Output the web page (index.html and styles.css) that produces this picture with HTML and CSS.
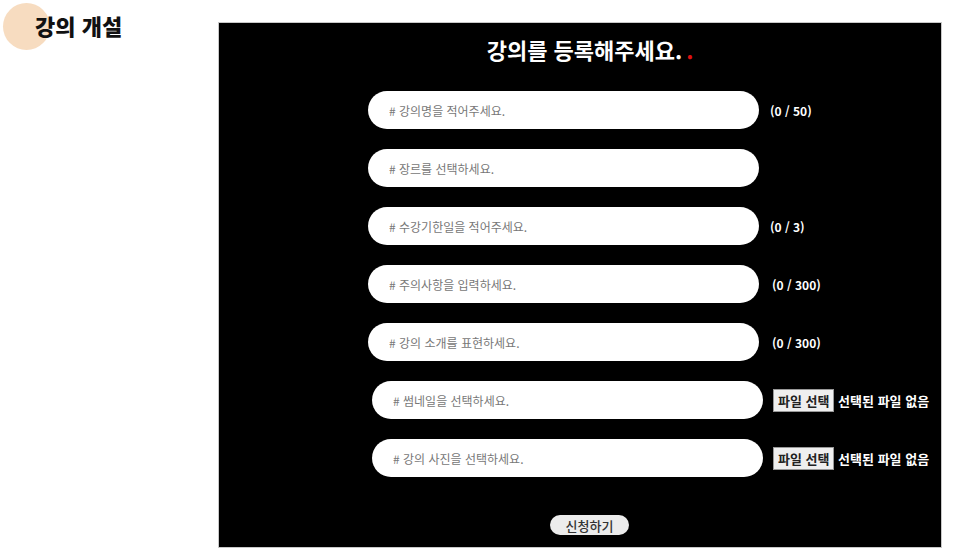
FILE: index.html
```html
<!DOCTYPE html>
<html lang="ko">
<head>
<meta charset="UTF-8">
<meta name="viewport" content="width=device-width, initial-scale=1.0">
<title>강의 개설</title>
<link rel="stylesheet" href="styles.css">
</head>
<body>

<div class="page">
    <div class="side">
        <h2 class="side-title"><span class="dot"></span><span class="side-text">강의 개설</span></h2>
    </div>

    <div class="panel">
        <h1 class="panel-title">강의를 등록해주세요.<span class="red">.</span></h1>

        <div class="form">
            <div class="row">
                <input class="field" type="text" placeholder="# 강의명을 적어주세요.">
                <span class="count">(0 / 50)</span>
            </div>
            <div class="row">
                <input class="field" type="text" placeholder="# 장르를 선택하세요.">
            </div>
            <div class="row">
                <input class="field" type="text" placeholder="# 수강기한일을 적어주세요.">
                <span class="count">(0 / 3)</span>
            </div>
            <div class="row">
                <input class="field" type="text" placeholder="# 주의사항을 입력하세요.">
                <span class="count wide">(0 / 300)</span>
            </div>
            <div class="row">
                <input class="field" type="text" placeholder="# 강의 소개를 표현하세요.">
                <span class="count wide">(0 / 300)</span>
            </div>
            <div class="row file-row">
                <input class="field" type="text" placeholder="# 썸네일을 선택하세요.">
                <span class="file"><button class="file-btn">파일 선택</button> 선택된 파일 없음</span>
            </div>
            <div class="row file-row">
                <input class="field" type="text" placeholder="# 강의 사진을 선택하세요.">
                <span class="file"><button class="file-btn">파일 선택</button> 선택된 파일 없음</span>
            </div>

            <button class="submit">신청하기</button>
        </div>
    </div>
</div>

</body>
</html>
```

FILE: styles.css
```css
body {
    font-family: "Noto Sans CJK KR", "Noto Sans", sans-serif;
    margin: 0;
    background: #ffffff;
}
.page {
    display: flex;
}
.side {
    width: 218px;
    flex: none;
}
.side-title {
    position: relative;
    margin: 0;
    padding: 11px 0 0 35px;
    font-size: 22px;
    font-weight: 900;
    color: #111;
    line-height: 28px;
}
.dot {
    position: absolute;
    left: 3px;
    top: 3px;
    width: 47px;
    height: 47px;
    border-radius: 50%;
    background: #f7dcc0;
}
.side-text {
    position: relative;
}
.panel {
    margin-top: 22px;
    width: 722px;
    height: 524px;
    background: #000;
    border: 1px solid #c8c8c8;
    box-sizing: content-box;
}
.panel-title {
    margin: 11px 0 0 20px;
    text-align: center;
    color: #fff;
    font-size: 22px;
    font-weight: bold;
    line-height: 30px;
}
.red {
    color: #d11;
    margin-left: 4px;
}
.form {
    margin: 27px 0 0 149px;
    display: flex;
    flex-direction: column;
    gap: 20px;
}
.row {
    display: flex;
    align-items: center;
    height: 38px;
}
.field {
    width: 391px;
    height: 38px;
    box-sizing: border-box;
    border: none;
    border-radius: 19px;
    background: #fff;
    padding: 0 0 0 21px;
    font-family: inherit;
    font-size: 12px;
    outline: none;
}
.field::placeholder {
    color: #777;
}
.count {
    margin-left: 11px;
    color: #fff;
    font-size: 12px;
    font-weight: bold;
}
.count.wide {
    margin-left: 13px;
}
.file-row {
    margin-left: 4px;
}
.file {
    margin-left: 10px;
    color: #fff;
    font-size: 13px;
    font-weight: bold;
}
.file-btn {
    font-family: inherit;
    font-size: 13px;
    font-weight: bold;
    color: #222;
    background: #efefef;
    border: 1px solid #999;
    padding: 1px 4px;
    margin-right: 0;
}
.submit {
    align-self: flex-start;
    margin: 18px 0 0 182px;
    width: 79px;
    height: 20px;
    border: none;
    border-radius: 10px;
    background: #ececec;
    font-family: inherit;
    font-size: 13px;
    font-weight: 500;
    color: #333;
    padding: 0;
}
```
